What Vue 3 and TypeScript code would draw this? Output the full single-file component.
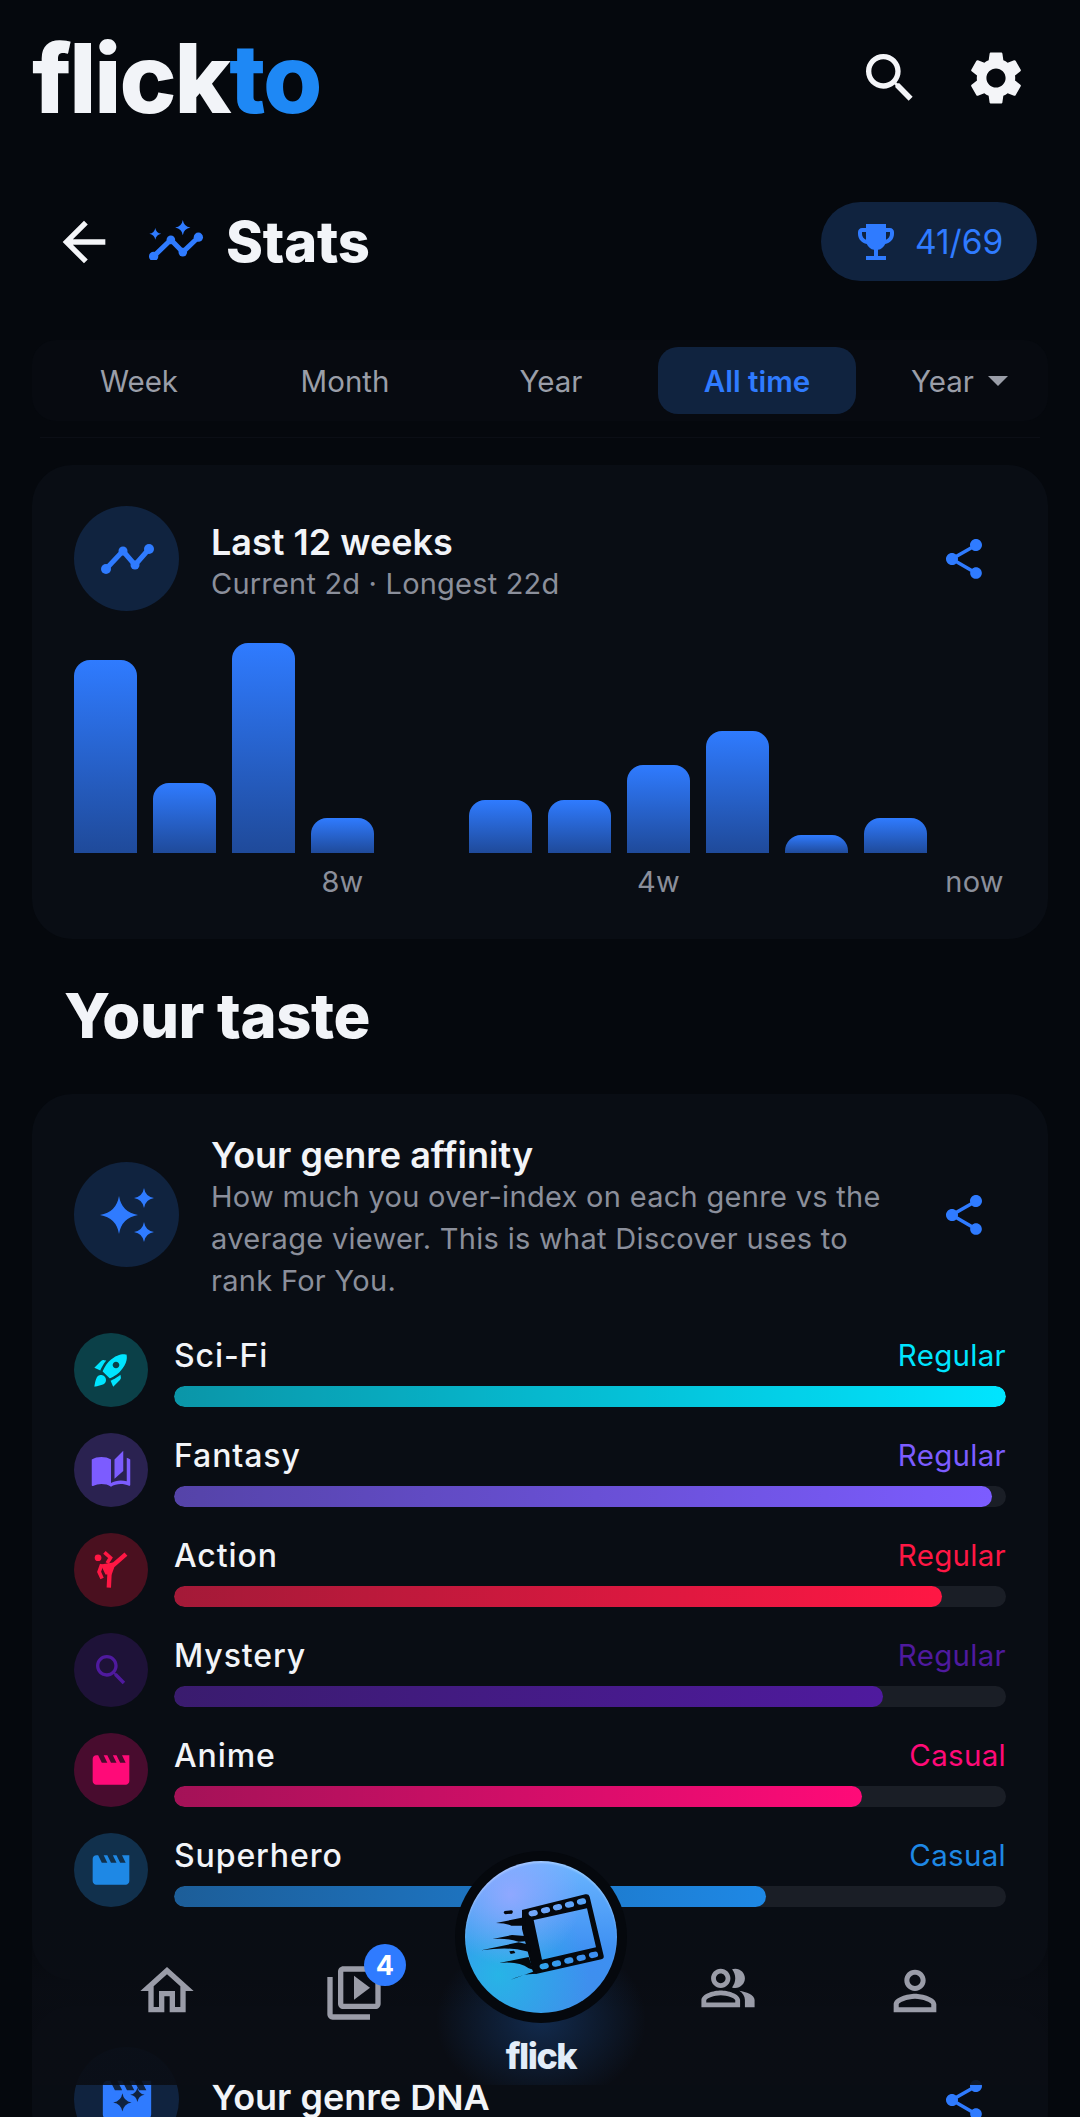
<script setup lang="ts">
interface Genre {
  name: string
  level: string
  color: string
  tint: string
  fill: number
  icon: string
  size: number
}

const MOVIE = 'M18 4l2 4h-3l-2-4h-2l2 4h-3l-2-4H8l2 4H7L5 4H4c-1.1 0-1.99.9-1.99 2L2 18c0 1.1.9 2 2 2h16c1.1 0 2-.9 2-2V4h-4z'
const SEARCH = 'M15.5 14h-.79l-.28-.27C15.41 12.59 16 11.11 16 9.5 16 5.91 13.09 3 9.5 3S3 5.91 3 9.5 5.91 16 9.5 16c1.61 0 3.09-.59 4.23-1.57l.27.28v.79l5 4.99L20.49 19l-4.99-5zm-6 0C7.01 14 5 11.99 5 9.5S7.01 5 9.5 5 14 7.01 14 9.5 11.99 14 9.5 14z'
const SHARE = 'M18 16.08c-.76 0-1.44.3-1.96.77L8.91 12.7c.05-.23.09-.46.09-.7s-.04-.47-.09-.7l7.05-4.11c.54.5 1.25.81 2.04.81 1.66 0 3-1.34 3-3s-1.34-3-3-3-3 1.34-3 3c0 .24.04.47.09.7L8.04 9.81C7.5 9.31 6.79 9 6 9c-1.66 0-3 1.34-3 3s1.34 3 3 3c.79 0 1.5-.31 2.04-.81l7.12 4.16c-.05.21-.08.43-.08.65 0 1.61 1.31 2.92 2.92 2.92s2.92-1.31 2.92-2.92-1.31-2.92-2.92-2.92z'

const star = (cx: number, cy: number, r: number): string => {
  const k = r * 0.14
  return `M${cx} ${cy - r}Q${cx + k} ${cy - k} ${cx + r} ${cy}Q${cx + k} ${cy + k} ${cx} ${cy + r}Q${cx - k} ${cy + k} ${cx - r} ${cy}Q${cx - k} ${cy - k} ${cx} ${cy - r}Z`
}

const tabs: string[] = ['Week', 'Month', 'Year', 'All time']
const bars: number[] = [193, 70, 210, 35, 0, 53, 53, 88, 122, 18, 35, 0]
const axis: string[] = ['', '', '', '8w', '', '', '', '4w', '', '', '', 'now']

const genres: Genre[] = [
  { name: 'Sci-Fi', level: 'Regular', color: '#00e5ff', tint: '#0b4048', fill: 100, size: 40, icon: 'M9.19 6.35c-2.04 2.29-3.44 5.58-3.57 5.89L2 10.69l4.05-4.05c.47-.47 1.15-.68 1.81-.55l1.33.26zM11.17 17s3.74-1.55 5.89-3.7c5.4-5.4 4.5-9.62 4.21-10.57-.95-.3-5.17-1.19-10.57 4.21C8.55 9.09 7 12.83 7 12.83L11.17 17zm6.48-2.19c-2.29 2.04-5.58 3.44-5.89 3.57L13.31 22l4.05-4.05c.47-.47.68-1.15.55-1.81l-.26-1.33zM9 18c0 .83-.34 1.58-.88 2.12C6.94 21.3 2 22 2 22s.7-4.94 1.88-6.12C4.42 15.34 5.17 15 6 15c1.66 0 3 1.34 3 3zm4-9c0-1.1.9-2 2-2s2 .9 2 2-.9 2-2 2-2-.9-2-2z' },
  { name: 'Fantasy', level: 'Regular', color: '#7c5cff', tint: '#2a2250', fill: 98.3, size: 42, icon: 'M19 1l-5 5v11l5-4.5V1zM1 6v14.65c0 .25.25.5.5.5.1 0 .15-.05.25-.05C3.1 20.45 5.05 20 6.5 20c1.95 0 4.05.4 5.5 1.5V6c-1.45-1.1-3.55-1.5-5.5-1.5S2.45 4.9 1 6zm22 13.5V6c-.6-.45-1.25-.8-2-1.05v13.5c-1.1-.35-2.3-.5-3.5-.5-1.7 0-4.15.65-5.5 1.5v2.05c1.35-.85 3.8-1.5 5.5-1.5 1.65 0 3.35.3 4.75 1.05.1.05.15.05.25.05.25 0 .5-.25.5-.5v-1.1z' },
  { name: 'Action', level: 'Regular', color: '#ff1744', tint: '#4a101f', fill: 92.3, size: 0, icon: '' },
  { name: 'Mystery', level: 'Regular', color: '#4f1a9e', tint: '#1e1238', fill: 85.2, size: 40, icon: SEARCH },
  { name: 'Anime', level: 'Casual', color: '#ff0a78', tint: '#480c2e', fill: 82.7, size: 44, icon: MOVIE },
  { name: 'Superhero', level: 'Casual', color: '#1e88e5', tint: '#11304c', fill: 71.2, size: 44, icon: MOVIE }
]
</script>

<template>
  <div class="screen">
    <header class="top">
      <div class="logo">flick<span>to</span></div>
      <div class="top-icons">
        <svg class="i64" viewBox="0 0 24 24" fill="#f4f5f8"><path :d="SEARCH" /></svg>
        <svg class="i64" viewBox="0 0 24 24" fill="#f4f5f8"><path d="M19.14 12.94c.04-.3.06-.61.06-.94 0-.32-.02-.64-.07-.94l2.03-1.58c.18-.14.23-.41.12-.61l-1.92-3.32c-.12-.22-.37-.29-.59-.22l-2.39.96c-.5-.38-1.03-.7-1.62-.94l-.36-2.54c-.04-.24-.24-.41-.48-.41h-3.84c-.24 0-.43.17-.47.41l-.36 2.54c-.59.24-1.13.57-1.62.94l-2.39-.96c-.22-.08-.47 0-.59.22L2.74 8.87c-.12.21-.08.47.12.61l2.03 1.58c-.05.3-.09.63-.09.94s.02.64.07.94l-2.03 1.58c-.18.14-.23.41-.12.61l1.92 3.32c.12.22.37.29.59.22l2.39-.96c.5.38 1.03.7 1.62.94l.36 2.54c.05.24.24.41.48.41h3.84c.24 0 .44-.17.47-.41l.36-2.54c.59-.24 1.13-.56 1.62-.94l2.39.96c.22.08.47 0 .59-.22l1.92-3.32c.12-.22.07-.47-.12-.61l-2.01-1.58zM12 15.6c-1.98 0-3.6-1.62-3.6-3.6s1.62-3.6 3.6-3.6 3.6 1.62 3.6 3.6-1.62 3.6-3.6 3.6z" /></svg>
      </div>
    </header>

    <div class="title-row">
      <svg class="i64" viewBox="0 0 24 24" fill="#f4f5f8"><path d="M20 11H7.83l5.59-5.59L12 4l-8 8 8 8 1.41-1.41L7.83 13H20v-2z" /></svg>
      <svg class="stats-icon" viewBox="50 50 175 125" fill="#2f7bff">
        <polyline points="70,165 122,115 158,152 205,107" fill="none" stroke="#2f7bff" stroke-width="15" stroke-linejoin="round" />
        <circle cx="70" cy="165" r="14" /><circle cx="122" cy="115" r="13" /><circle cx="158" cy="152" r="13" /><circle cx="205" cy="107" r="14" />
        <path :d="star(158, 78, 23)" /><path :d="star(75, 97, 18)" />
      </svg>
      <h1 class="page-title">Stats</h1>
      <div class="pill">
        <svg class="trophy" viewBox="0 0 24 24" fill="#2f7bff"><path d="M19 5h-2V3H7v2H5c-1.1 0-2 .9-2 2v1c0 2.55 1.92 4.63 4.39 4.94.63 1.5 1.98 2.63 3.61 2.96V19H7v2h10v-2h-4v-3.1c1.63-.33 2.98-1.46 3.61-2.96C19.08 12.63 21 10.55 21 8V7c0-1.1-.9-2-2-2zM5 8V7h2v3.82C5.84 10.4 5 9.3 5 8zm14 0c0 1.3-.84 2.4-2 2.82V7h2v1z" /></svg>
        <span>41/69</span>
      </div>
    </div>

    <div class="segment">
      <div v-for="t in tabs" :key="t" class="tab" :class="{ active: t === 'All time' }">{{ t }}</div>
      <div class="drop">Year<i class="caret"></i></div>
    </div>
    <div class="hairline"></div>

    <section class="card first">
      <div class="head">
        <div class="avatar">
          <svg class="trend" viewBox="0 0 54 30" fill="#2f7bff">
            <polyline points="6,25 23,7 35,21 49,5" fill="none" stroke="#2f7bff" stroke-width="5" stroke-linejoin="round" />
            <circle cx="6" cy="25" r="5" /><circle cx="23" cy="7" r="4.5" /><circle cx="35" cy="21" r="4.5" /><circle cx="49" cy="5" r="5" />
          </svg>
        </div>
        <div class="head-text pushed">
          <h3>Last 12 weeks</h3>
          <p>Current 2d · Longest 22d</p>
        </div>
        <svg class="share" viewBox="0 0 24 24" fill="#2f7bff"><path :d="SHARE" /></svg>
      </div>
      <div class="chart">
        <div v-for="(h, i) in bars" :key="i" class="bar" :style="{ height: h + 'px' }"></div>
      </div>
      <div class="axis">
        <span v-for="(a, i) in axis" :key="i">{{ a }}</span>
      </div>
    </section>

    <h2 class="section-title">Your taste</h2>

    <section class="card second">
      <div class="head">
        <div class="avatar">
          <svg class="full" viewBox="0 0 105 105" fill="#2f7bff">
            <path :d="star(45, 53, 19)" /><path :d="star(70, 36, 10)" /><path :d="star(70, 70, 10)" />
          </svg>
        </div>
        <div class="head-text pushed">
          <h3>Your genre affinity</h3>
          <p class="desc">How much you over-index on each genre vs the average viewer. This is what Discover uses to rank For You.</p>
        </div>
        <svg class="share" viewBox="0 0 24 24" fill="#2f7bff"><path :d="SHARE" /></svg>
      </div>
      <div class="rows">
        <div v-for="g in genres" :key="g.name" class="row">
          <div class="dot" :style="{ background: g.tint }">
            <svg v-if="g.icon" viewBox="0 0 24 24" :width="g.size" :height="g.size" :fill="g.color"><path :d="g.icon" /></svg>
            <svg v-else viewBox="280 510 110 125" width="37" height="42" :fill="g.color">
              <circle cx="295" cy="536" r="10" />
              <path d="M303 556L340 550L335 586L317 586Z" />
              <g fill="none" :stroke="g.color">
                <polyline points="378,525 338,560 329,585 327,625" stroke-width="13" />
                <polyline points="314,520 332,536 322,552" stroke-width="11" />
                <polyline points="306,556 298,578 307,598" stroke-width="11" />
              </g>
            </svg>
          </div>
          <div class="row-body">
            <div class="row-top">
              <span class="name">{{ g.name }}</span>
              <span class="level" :style="{ color: g.color }">{{ g.level }}</span>
            </div>
            <div class="track">
              <div class="fill" :style="{ width: g.fill + '%', background: `linear-gradient(90deg, ${g.color}99, ${g.color})` }"></div>
            </div>
          </div>
        </div>
      </div>
    </section>

    <section class="card third">
      <div class="head">
        <div class="avatar">
          <svg class="clap" viewBox="0 0 24 24">
            <path fill="#2f7bff" :d="MOVIE" />
            <path fill="#10233f" :d="star(10.1, 13, 3.8)" /><path fill="#10233f" :d="star(16.3, 9.8, 3)" />
          </svg>
        </div>
        <div class="head-text raised"><h3>Your genre DNA</h3></div>
        <svg class="share" viewBox="0 0 24 24" fill="#2f7bff"><path :d="SHARE" /></svg>
      </div>
    </section>

    <nav class="nav">
      <div class="glow"></div>
      <div class="nav-item">
        <svg class="i64" viewBox="0 0 24 24" fill="#9a9ca8"><path d="M12 5.69l5 4.5V18h-2v-6H9v6H7v-7.81l5-4.5M12 3L2 12h3v8h6v-6h2v6h6v-8h3L12 3z" /></svg>
      </div>
      <div class="nav-item lib">
        <svg class="i64" viewBox="0 0 24 24" fill="#9a9ca8"><path d="M4 6H2v14c0 1.1.9 2 2 2h14v-2H4V6zm16-4H8c-1.1 0-2 .9-2 2v12c0 1.1.9 2 2 2h12c1.1 0 2-.9 2-2V4c0-1.1-.9-2-2-2zm0 14H8V4h12v12zM12 5.5v9l6-4.5z" /></svg>
        <span class="badge">4</span>
      </div>
      <div class="nav-item"></div>
      <div class="nav-item">
        <svg class="i58" viewBox="0 0 24 24" fill="#9a9ca8"><path d="M16.67 13.13C18.04 14.06 19 15.32 19 17v3h4v-3c0-2.18-3.57-3.47-6.33-3.87zM15 12c2.21 0 4-1.79 4-4s-1.79-4-4-4c-.47 0-.91.1-1.33.24C14.5 5.27 15 6.58 15 8s-.5 2.73-1.33 3.76c.42.14.86.24 1.33.24zM9 12c2.21 0 4-1.79 4-4s-1.79-4-4-4-4 1.79-4 4 1.79 4 4 4zm0-6c1.1 0 2 .9 2 2s-.9 2-2 2-2-.9-2-2 .9-2 2-2zM9 13c-2.67 0-8 1.34-8 4v3h16v-3c0-2.66-5.33-4-8-4zm6 5H3v-.99C3.2 16.29 6.3 15 9 15s5.8 1.29 6 2z" /></svg>
      </div>
      <div class="nav-item">
        <svg class="i64" viewBox="0 0 24 24" fill="#9a9ca8"><path d="M12 5.9c1.16 0 2.1.94 2.1 2.1s-.94 2.1-2.1 2.1S9.9 9.16 9.9 8s.94-2.1 2.1-2.1m0 9c2.97 0 6.1 1.46 6.1 2.1v1.1H5.9V17c0-.64 3.13-2.1 6.1-2.1M12 4C9.79 4 8 5.79 8 8s1.79 4 4 4 4-1.79 4-4-1.79-4-4-4zm0 9c-2.67 0-8 1.34-8 4v3h16v-3c0-2.66-5.33-4-8-4z" /></svg>
      </div>
    </nav>

    <div class="flick">
      <div class="flick-btn">
        <svg viewBox="129 66 456 456" width="152" height="152" fill="#05080d">
          <path fill-rule="evenodd" d="M300 213L490 166Q500 164 503 173L545 350Q547 358 538 361L345 404Q335 405 332 396L300 270ZM335 243L360 362L522 325L495 208ZM327 215Q318 217 320 226Q323 234 332 232L341 230Q349 228 347 220Q345 211 336 213ZM364 206Q355 208 357 217Q360 225 369 223L378 221Q386 219 384 211Q382 202 373 204ZM400 197Q391 199 393 208Q396 216 405 214L414 212Q422 210 420 202Q418 193 409 195ZM436 189Q427 191 429 200Q432 208 441 206L450 204Q458 202 456 194Q454 185 445 187ZM472 180Q463 182 465 191Q468 199 477 197L486 195Q494 193 492 185Q490 176 481 178ZM360 374Q351 376 353 385Q356 393 365 391L374 389Q382 387 380 379Q378 370 369 372ZM397 366Q388 368 390 377Q393 385 402 383L411 381Q419 379 417 371Q415 362 406 364ZM434 357Q425 359 427 368Q430 376 439 374L448 372Q456 370 454 362Q452 353 443 355ZM471 349Q462 351 464 360Q467 368 476 366L485 364Q493 362 491 354Q489 345 480 347ZM508 340Q499 342 501 351Q504 359 513 357L522 355Q530 353 528 345Q526 336 517 338Z" />
          <path d="M248 216L268 214Q276 216 270 224L250 226Q242 222 248 216Z" />
          <path d="M222 252L310 234L312 260L268 260Q250 252 222 252Z" />
          <path d="M212 300L270 288L318 292L320 306L290 308Q250 296 212 300Z" />
          <path d="M178 334L290 310L300 312L324 318L326 340L310 336Q260 322 178 334Z" />
          <path d="M262 337L276 335L280 342L266 345Z" />
          <path d="M232 372L320 354L334 392L320 388Q290 366 232 372Z" />
          <path d="M266 422L340 396L345 404L320 406Q300 408 266 422Z" />
        </svg>
      </div>
      <div class="flick-label">flick</div>
    </div>
  </div>
</template>

<style>
html, body { margin: 0; background: #05080d; }
</style>

<style scoped>
.screen { position: relative; width: 1080px; height: 2117px; overflow: hidden; background: #05080d; color: #f2f4f8; font-family: Inter, "Noto Sans", sans-serif; }
h1, h2, h3, p { margin: 0; }
svg { display: block; flex: none; }
.i64 { width: 64px; height: 64px; }
.i58 { width: 58px; height: 58px; }

.top { display: flex; align-items: center; justify-content: space-between; height: 156px; padding: 0 52px 0 32px; box-sizing: border-box; }
.logo { font-size: 96px; font-weight: 800; letter-spacing: -2.1px; line-height: 1; color: #f2f4f8; }
.logo span { color: #1e88f5; }
.top-icons { display: flex; gap: 42px; }

.title-row { display: flex; align-items: center; height: 79px; margin-top: 46px; padding: 0 43px 0 52px; }
.stats-icon { width: 58px; height: 42px; margin-left: 31px; margin-top: -6px; }
.page-title { font-size: 56px; font-weight: 800; letter-spacing: -0.2px; line-height: 1; margin-left: 21px; }
.pill { display: flex; align-items: center; gap: 15px; height: 79px; width: 216px; box-sizing: border-box; margin-left: auto; padding-left: 31px; border-radius: 40px; background: #10233f; color: #2f7bff; font-size: 33.5px; }
.trophy { width: 48px; height: 48px; }

.segment { display: flex; gap: 8px; height: 81px; margin: 59px 32px 0; padding: 7px 8px; box-sizing: border-box; border-radius: 24px; background: #070a10; }
.tab { display: flex; align-items: center; justify-content: center; width: 198px; height: 67px; border-radius: 20px; font-size: 29.5px; color: #9a9ea8; }
.tab.active { background: #10233f; color: #2f7bff; font-weight: 600; }
.drop { display: flex; align-items: center; margin-left: 17px; padding-left: 30px; gap: 14px; font-size: 29.5px; color: #9a9ea8; }
.caret { width: 0; height: 0; border-left: 10px solid transparent; border-right: 10px solid transparent; border-top: 10px solid #9a9ea8; }
.hairline { height: 1px; margin: 16px 40px 0; background: #0b0e15; }

.card { margin: 0 32px; padding: 41px 42px 0; border-radius: 40px; background: #090d14; }
.first { height: 474px; margin-top: 27px; box-sizing: border-box; }
.second { padding-top: 33px; }
.head { display: flex; align-items: center; gap: 32px; }
.avatar { display: flex; align-items: center; justify-content: center; flex: none; width: 105px; height: 105px; border-radius: 50%; background: #10233f; }
.trend { width: 54px; height: 30px; }
.full { width: 105px; height: 105px; }
.clap { width: 58px; height: 58px; }
.head-text { flex: 1; min-width: 0; }
.pushed { padding-top: 8px; }
.raised { padding-bottom: 5px; }
.head-text h3 { font-size: 36px; font-weight: 600; line-height: 41px; }
.head-text p { font-size: 29px; line-height: 41px; color: #8b8f9b; letter-spacing: 0.2px; }
.head-text .desc { line-height: 42px; letter-spacing: 0.3px; }
.share { width: 48px; height: 48px; margin-right: 18px; margin-left: 8px; }

.chart { display: grid; grid-template-columns: repeat(12, 63px); gap: 16px; align-items: end; height: 210px; margin-top: 32px; }
.bar { border-radius: 16px 16px 0 0; background: linear-gradient(180deg, #2f7bff, #1f4a9a); }
.axis { display: grid; grid-template-columns: repeat(12, 63px); gap: 16px; margin-top: 12px; font-size: 29px; line-height: 34px; color: #8b8f9b; letter-spacing: 0.2px; }
.axis span { display: flex; justify-content: center; white-space: nowrap; }

.section-title { margin: 41px 0 0 64px; font-size: 61.5px; font-weight: 800; letter-spacing: -0.4px; line-height: 72px; height: 114px; }

.rows { display: flex; flex-direction: column; gap: 26px; margin-top: 31px; padding-bottom: 73px; }
.row { display: flex; gap: 26px; height: 74px; }
.dot { display: flex; align-items: center; justify-content: center; flex: none; width: 74px; height: 74px; border-radius: 50%; }
.row-body { flex: 1; display: flex; flex-direction: column; justify-content: space-between; }
.row-top { display: flex; justify-content: space-between; align-items: center; height: 44px; }
.name { font-size: 32px; font-weight: 500; letter-spacing: 0.9px; }
.level { font-size: 29.5px; letter-spacing: 0.3px; }
.track { height: 21px; border-radius: 11px; background: #1a1e26; overflow: hidden; }
.fill { height: 100%; border-radius: 11px; }

.third { margin-top: 26px; }

.nav { position: absolute; left: 32px; right: 32px; top: 1910px; height: 175px; display: grid; grid-template-columns: repeat(5, 187px); padding-left: 41px; background: linear-gradient(180deg, rgba(10, 14, 21, 0), rgba(10, 13, 20, 0.9) 45%, rgba(10, 13, 20, 0.9)); }
.glow { position: absolute; left: 359px; top: 60px; width: 300px; height: 115px; background: radial-gradient(ellipse 105px 85px at 150px 50px, rgba(30, 90, 170, 0.38), rgba(30, 90, 170, 0) 100%); }
.nav-item { position: relative; display: flex; justify-content: center; align-items: flex-start; padding-top: 49px; }
.lib { padding-top: 51px; }
.badge { position: absolute; left: 104px; top: 34px; width: 42px; height: 42px; border-radius: 50%; background: #2f7bff; color: #fff; font-size: 27px; font-weight: 700; display: flex; align-items: center; justify-content: center; }

.flick { position: absolute; left: 441px; top: 1851px; width: 200px; display: flex; flex-direction: column; align-items: center; }
.flick-btn { box-sizing: border-box; width: 172px; height: 172px; padding: 10px; border-radius: 50%; background: #05080d; }
.flick-btn svg { border-radius: 50%; background: radial-gradient(circle at 30% 22%, #8fa8ff 0, rgba(143, 168, 255, 0) 45%), radial-gradient(circle at 22% 75%, #27b4e6 0, rgba(39, 180, 230, 0) 55%), linear-gradient(180deg, #6cb6ff, #3d8ff2 60%, #3f8fea); box-shadow: inset 0 2px 2px rgba(255, 255, 255, 0.3); }
.flick-label { margin-top: 11px; font-size: 36px; font-weight: 800; letter-spacing: -1.5px; line-height: 44px; color: #e2ecf8; }
</style>
